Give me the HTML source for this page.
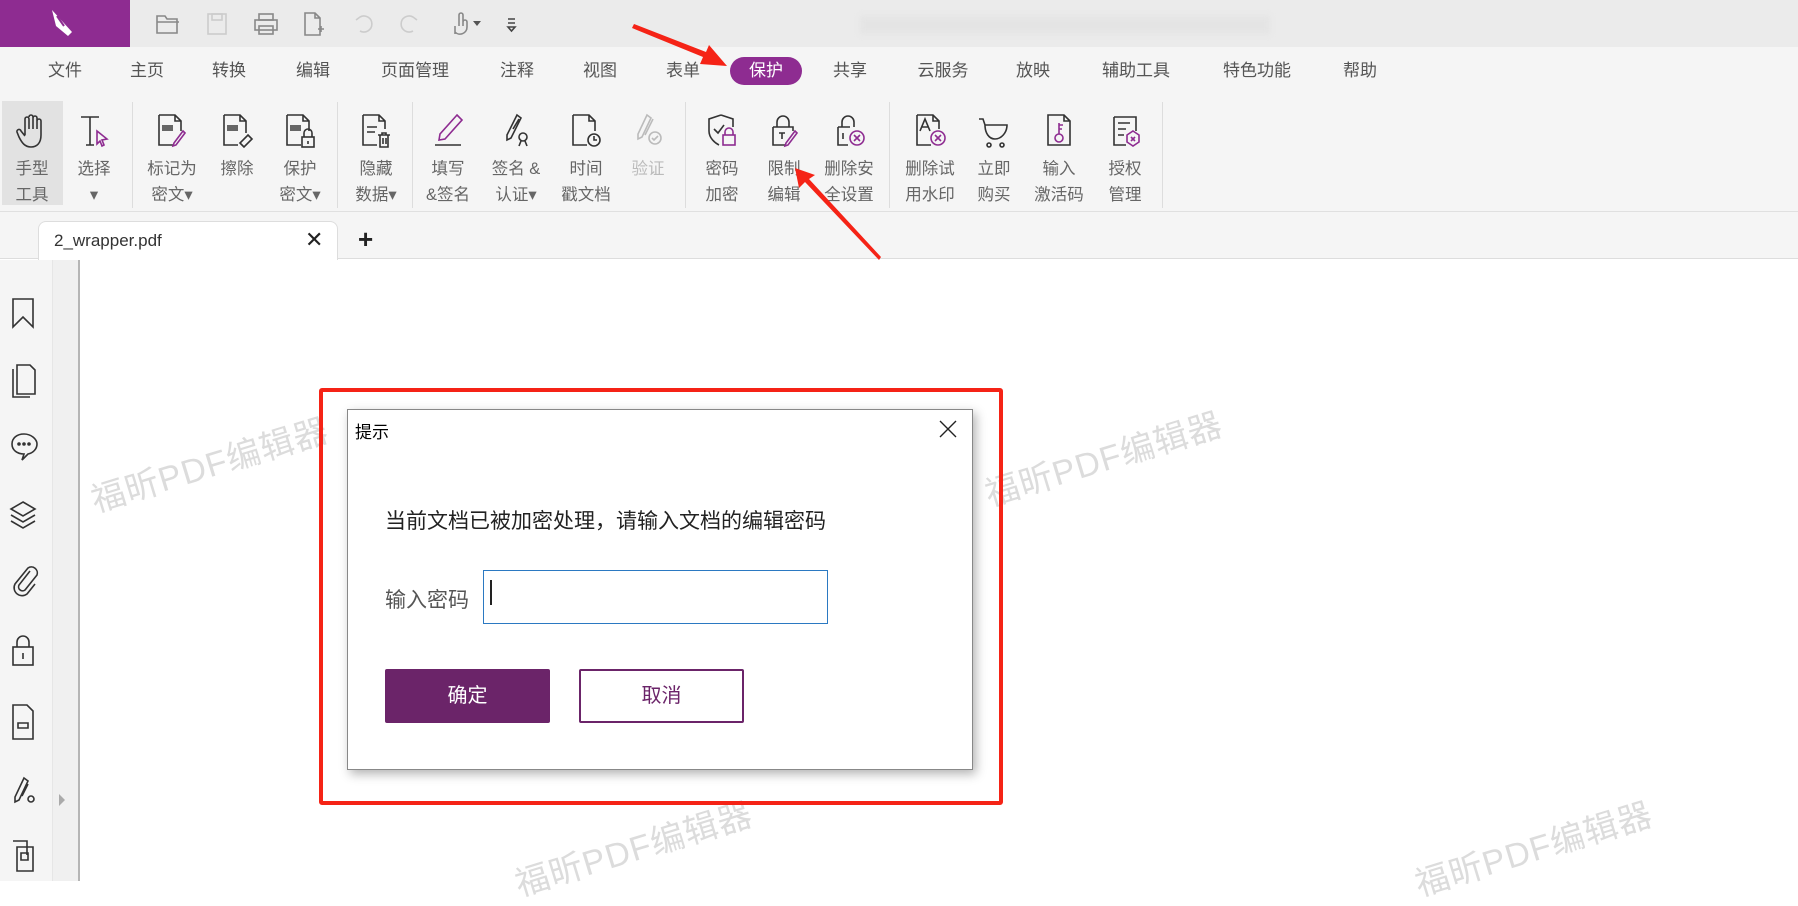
<!DOCTYPE html>
<html><head><meta charset="utf-8"><style>
*{margin:0;padding:0;box-sizing:border-box}
body{width:1798px;height:881px;overflow:hidden;background:#fff;font-family:"Liberation Sans","Noto Sans CJK SC",sans-serif;position:relative}
.a{position:absolute}
.menu{position:absolute;top:58px;font-size:17px;color:#555;transform:translateX(-50%);white-space:nowrap;line-height:26px}
.rb{position:absolute;top:111px;width:60px;transform:translateX(-50%);text-align:center;font-size:16.5px;color:#666;line-height:26px}
.rb svg{display:block;margin:0 auto 5px;width:38px;height:40px}
.sep{position:absolute;top:102px;width:1px;height:106px;background:#ddd}
.wm{position:absolute;font-size:34px;color:#dcdcdc;transform:rotate(-17deg);white-space:nowrap;letter-spacing:1px}
</style></head><body>
<div class="a" style="left:0;top:0;width:1798px;height:47px;background:#ebebeb"></div>
<div class="a" style="left:0;top:0;width:130px;height:47px;background:#8e2c91"></div>
<svg class="a" style="left:48px;top:8px" width="30" height="30" viewBox="0 0 30 30"><path d="M4 2 L24 24 L20 28 L8 18 Z" fill="#fff"/><path d="M9 8 L16 18" stroke="#8e2c91" stroke-width="2"/></svg>
<svg class="a" style="left:155px;top:10px" width="370" height="28" viewBox="0 0 370 28" fill="none" stroke="#888" stroke-width="1.6">
<path d="M2 6h8l2 3h10v14H2z M2 12h22"/>
<rect x="53" y="4" width="18" height="20" stroke="#ccc"/><rect x="57" y="4" width="10" height="6" stroke="#ccc"/>
<rect x="100" y="10" width="22" height="10"/><rect x="104" y="4" width="14" height="6"/><rect x="104" y="16" width="14" height="8"/>
<path d="M150 3h10l5 5v17h-15z M160 3v5h5 M163 19h6 M166 16v6"/>
<path d="M205 7a8 8 0 1 1 0 14 M205 7l-4 3" stroke="#ccc"/>
<path d="M258 7a8 8 0 1 0 0 14 M258 7l4 3" stroke="#ccc"/>
<path d="M300 24v-8 M304 16V5a2 2 0 0 1 4 0v11 M308 12a2 2 0 0 1 4 0v5a7 7 0 0 1-12 5"/>
<path d="M318 11l4 5 4-5z" fill="#555" stroke="none"/>
<path d="M353 13h7 M353 17l3.5 4 3.5-4z M353 9h7" stroke="#444"/>
</svg>
<div class="a" style="left:860px;top:16px;width:410px;height:18px;background:#e4e4e4;filter:blur(3px)"></div>
<div class="a" style="left:0;top:47px;width:1798px;height:165px;background:#f5f5f5"></div>
<div class="a" style="left:730px;top:57px;width:72px;height:28px;border-radius:14px;background:#8e2c91"></div>
<div class="menu" style="left:65px">文件</div><div class="menu" style="left:147px">主页</div><div class="menu" style="left:229px">转换</div><div class="menu" style="left:313px">编辑</div><div class="menu" style="left:415px">页面管理</div><div class="menu" style="left:517px">注释</div><div class="menu" style="left:600px">视图</div><div class="menu" style="left:683px">表单</div><div class="menu" style="left:766px;color:#fff">保护</div><div class="menu" style="left:850px">共享</div><div class="menu" style="left:943px">云服务</div><div class="menu" style="left:1033px">放映</div><div class="menu" style="left:1136px">辅助工具</div><div class="menu" style="left:1257px">特色功能</div><div class="menu" style="left:1360px">帮助</div>
<div class="a" style="left:2px;top:101px;width:61px;height:104px;background:#e2e2e2"></div>
<div class="sep" style="left:132px"></div><div class="sep" style="left:337px"></div><div class="sep" style="left:412px"></div><div class="sep" style="left:685px"></div><div class="sep" style="left:889px"></div><div class="sep" style="left:1162px"></div>
<div class="a" style="left:0;top:211px;width:1798px;height:1px;background:#e0e0e0"></div>
<div class="rb" style="left:32px"><svg viewBox="0 0 38 40" fill="none" stroke="#333" stroke-width="1.6"><path d="M12 24V8a2 2 0 0 1 4 0v10 M16 6a2 2 0 0 1 4 0v12 M20 7a2 2 0 0 1 4 0v11 M24 10a2 2 0 0 1 4 0v14c0 8-4 12-10 12s-9-4-12-10l-2-5a2 2 0 0 1 4-1l4 5"/></svg>手型<br>工具</div>
<div class="rb" style="left:94px"><svg viewBox="0 0 38 40" fill="none" stroke="#333" stroke-width="1.6"><path d="M6 6h18 M15 6v28 M11 34h8"/><path d="M22 20l10 8-5 1 2 5-2 1-2-5-3 3z" stroke="#8e2c91"/></svg>选择<br>▾</div>
<div class="rb" style="left:172px"><svg viewBox="0 0 38 40" fill="none" stroke="#333" stroke-width="1.6"><path d="M6 4h16l6 6v10 M22 4v6h6 M6 4v30h14"/><rect x="9" y="14" width="11" height="6" fill="#666" stroke="none"/><path d="M32 22l-9 12-3 1 1-3 9-12z" stroke="#8e2c91"/></svg>标记为<br>密文▾</div>
<div class="rb" style="left:237px"><svg viewBox="0 0 38 40" fill="none" stroke="#333" stroke-width="1.6"><path d="M6 4h16l6 6v12 M22 4v6h6 M6 4v30h14"/><rect x="9" y="14" width="11" height="6" fill="#666" stroke="none"/><path d="M30 24l4 4-8 8-4-4z M22 32l4 4"/></svg>擦除</div>
<div class="rb" style="left:300px"><svg viewBox="0 0 38 40" fill="none" stroke="#333" stroke-width="1.6"><path d="M6 4h16l6 6v10 M22 4v6h6 M6 4v30h14"/><rect x="9" y="14" width="11" height="6" fill="#666" stroke="none"/><rect x="21" y="26" width="12" height="10"/><path d="M23 26v-4a4 4 0 0 1 8 0v4 M27 30v3"/></svg>保护<br>密文▾</div>
<div class="rb" style="left:376px"><svg viewBox="0 0 38 40" fill="none" stroke="#333" stroke-width="1.6"><path d="M6 4h16l6 6v8 M22 4v6h6 M6 4v30h14 M10 16h10 M10 21h8"/><path d="M21 24h12 M23 24v12h8V24 M26 27v6 M29 27v6 M25 24v-2h4v2"/></svg>隐藏<br>数据▾</div>
<div class="rb" style="left:448px"><svg viewBox="0 0 38 40" fill="none" stroke="#8e2c91" stroke-width="1.6"><path d="M28 4l5 5-17 19-6 1 1-6z"/><path d="M6 34h26" stroke="#333"/></svg>填写<br>&amp;签名</div>
<div class="rb" style="left:516px"><svg viewBox="0 0 38 40" fill="none" stroke="#333" stroke-width="1.6"><path d="M20 4l4 3-10 20-4 2 0-5z M22 8l-6 10"/><circle cx="26" cy="26" r="4"/><path d="M24 30l-2 5 M28 30l2 5"/></svg>签名 &amp;<br>认证▾</div>
<div class="rb" style="left:586px"><svg viewBox="0 0 38 40" fill="none" stroke="#333" stroke-width="1.6"><path d="M6 4h16l6 6v10 M22 4v6h6 M6 4v30h14"/><circle cx="27" cy="29" r="6"/><path d="M27 25v4h3"/></svg>时间<br>戳文档</div>
<div class="rb" style="left:648px;color:#bbb"><svg viewBox="0 0 38 40" fill="none" stroke="#bbb" stroke-width="1.6"><path d="M18 4l4 3-9 19-4 2 0-5z M24 8l-8 16"/><circle cx="26" cy="27" r="6"/><path d="M23 27l2 2 4-4"/></svg>验证</div>
<div class="rb" style="left:722px"><svg viewBox="0 0 38 40" fill="none" stroke="#333" stroke-width="1.6"><path d="M18 4l12 4v8 M18 4L6 8v12c0 7 6 12 10 14"/><path d="M11 18l4 4 6-8"/><rect x="20" y="24" width="12" height="10" stroke="#8e2c91"/><path d="M22 24v-3a4 4 0 0 1 8 0v3" stroke="#8e2c91"/></svg>密码<br>加密</div>
<div class="rb" style="left:784px"><svg viewBox="0 0 38 40" fill="none" stroke="#333" stroke-width="1.6"><path d="M12 16v-5a6 6 0 0 1 12 0v5 M8 16h20v4 M8 16v18h12 M14 22h6 M17 22v6"/><path d="M32 22l-9 12-3 1 1-3 9-12z" stroke="#8e2c91"/></svg>限制<br>编辑</div>
<div class="rb" style="left:849px"><svg viewBox="0 0 38 40" fill="none" stroke="#333" stroke-width="1.6"><path d="M12 16v-5a6 6 0 0 1 12 0v5 M8 16h12 M8 16v18h10 M13 22v6"/><circle cx="27" cy="27" r="7" stroke="#8e2c91"/><path d="M24 24l6 6 M30 24l-6 6" stroke="#8e2c91"/></svg>删除安<br>全设置</div>
<div class="rb" style="left:930px"><svg viewBox="0 0 38 40" fill="none" stroke="#333" stroke-width="1.6"><path d="M6 4h16l6 6v8 M22 4v6h6 M6 4v30h14 M9 20l5-12 5 12 M11 16h6"/><circle cx="27" cy="27" r="7" stroke="#8e2c91"/><path d="M24 24l6 6 M30 24l-6 6" stroke="#8e2c91"/></svg>删除试<br>用水印</div>
<div class="rb" style="left:994px"><svg viewBox="0 0 38 40" fill="none" stroke="#333" stroke-width="1.6"><path d="M4 8h4l2 6h22c0 8-6 14-12 14s-10-6-10-14"/><circle cx="14" cy="34" r="2"/><circle cx="27" cy="34" r="2"/></svg>立即<br>购买</div>
<div class="rb" style="left:1059px"><svg viewBox="0 0 38 40" fill="none" stroke="#333" stroke-width="1.6"><path d="M8 4h16l6 6v24H8z M24 4v6h6"/><circle cx="19" cy="27" r="4" stroke="#8e2c91"/><path d="M19 23V12 M19 14h4 M19 18h3" stroke="#8e2c91"/></svg>输入<br>激活码</div>
<div class="rb" style="left:1125px"><svg viewBox="0 0 38 40" fill="none" stroke="#333" stroke-width="1.6"><path d="M8 6h22v14 M8 6v28h12 M12 12h12 M12 18h8 M12 24h6"/><path d="M27 20l6 4v7l-6 4-6-4v-7z" stroke="#8e2c91"/><path d="M25 26l4 4 M29 26l-4 4" stroke="#8e2c91"/></svg>授权<br>管理</div>
<div class="a" style="left:0;top:212px;width:1798px;height:47px;background:#f5f5f5;border-bottom:1px solid #ddd"></div>
<div class="a" style="left:38px;top:221px;width:300px;height:39px;background:#fff;border:1px solid #ddd;border-bottom:none;border-radius:8px 8px 0 0"></div>
<div class="a" style="left:54px;top:231px;font-size:17px;color:#333">2_wrapper.pdf</div>
<div class="a" style="left:305px;top:227px;font-size:22px;color:#222">✕</div>
<div class="a" style="left:358px;top:224px;font-size:26px;color:#222;font-weight:bold">+</div>
<div class="a" style="left:0;top:260px;width:53px;height:621px;background:#f5f5f5;border-right:1px solid #e6e6e6"></div>
<div class="a" style="left:53px;top:260px;width:27px;height:621px;background:#f0f0f0;border-right:2px solid #b5b5b5"></div>
<div class="a" style="left:59px;top:794px;width:0;height:0;border-top:6px solid transparent;border-bottom:6px solid transparent;border-left:6px solid #aaa"></div>
<svg class="a" style="left:8px;top:295px" width="36" height="580" viewBox="0 0 36 580" fill="none" stroke="#333" stroke-width="1.6">
<path d="M5 4h20v28l-10-10-10 10z"/>
<path d="M9 70h13l5 5v24H9z M5 74v28h17"/>
<g transform="translate(0,11)"><path d="M16 128c-7 0-12 4-12 10s5 10 12 10l-2 6 6-6c5-1 9-5 9-10s-6-10-13-10z"/><circle cx="11" cy="138" r="1" fill="#333"/><circle cx="16" cy="138" r="1" fill="#333"/><circle cx="21" cy="138" r="1" fill="#333"/></g>
<g transform="translate(0,7)"><path d="M15 200l12 7-12 7-12-7z M3 213l12 7 12-7 M3 219l12 7 12-7"/></g>
<g transform="translate(0,8)"><path d="M22 268l-11 14a4 4 0 0 0 6 5l12-15a6 6 0 0 0-9-7l-13 16a8 8 0 0 0 12 10l8-10"/></g>
<g transform="translate(0,7)"><rect x="5" y="345" width="20" height="18"/><path d="M9 345v-5a6 6 0 0 1 12 0v5 M15 351v6"/></g>
<path d="M5 410h14l6 6v28H5z M10 428h10v5H10z"/>
<g transform="translate(0,7)"><path d="M16 476l4 3-9 19-4 2 0-5z M20 482l-6 12"/><circle cx="23" cy="497" r="3"/></g>
<g transform="translate(0,2)"><path d="M5 544h14v14 M9 550h16v24H9z M13 556h7v7h-7z"/></g>
</svg>
<div class="wm" style="left:86px;top:438px">福昕PDF编辑器</div>
<div class="wm" style="left:980px;top:432px">福昕PDF编辑器</div>
<div class="wm" style="left:510px;top:822px">福昕PDF编辑器</div>
<div class="wm" style="left:1410px;top:822px">福昕PDF编辑器</div>
<div class="a" style="left:319px;top:388px;width:684px;height:417px;border:4px solid #f52316;border-radius:3px"></div>
<div class="a" style="left:347px;top:409px;width:626px;height:361px;background:#fff;border:1px solid #888;box-shadow:3px 4px 10px rgba(0,0,0,.3)"></div>
<div class="a" style="left:355px;top:418px;font-size:17px;color:#000">提示</div>
<svg class="a" style="left:939px;top:420px" width="18" height="18"><path d="M1 1L17 17M17 1L1 17" stroke="#222" stroke-width="1.4"/></svg>
<div class="a" style="left:385px;top:505px;font-size:21px;color:#222">当前文档已被加密处理，请输入文档的编辑密码</div>
<div class="a" style="left:385px;top:584px;font-size:21px;color:#555">输入密码</div>
<div class="a" style="left:483px;top:570px;width:345px;height:54px;border:1px solid #2b79c2"></div>
<div class="a" style="left:490px;top:580px;width:2px;height:25px;background:#222"></div>
<div class="a" style="left:385px;top:669px;width:165px;height:54px;background:#6b2469;color:#fff;font-size:20px;text-align:center;line-height:54px;border-radius:2px">确定</div>
<div class="a" style="left:579px;top:669px;width:165px;height:54px;border:2px solid #6b2469;color:#6b2469;font-size:20px;text-align:center;line-height:50px;border-radius:2px">取消</div>
<svg class="a" style="left:0;top:0" width="1798" height="881">
<polygon points="634,24 706,52 709,45 727,66 700,64 703,57 632,28" fill="#f52316"/>
<polygon points="879,260 805,182 799,188 795,168 815,175 809,179 881,257" fill="#f52316"/>
</svg>
</body></html>
